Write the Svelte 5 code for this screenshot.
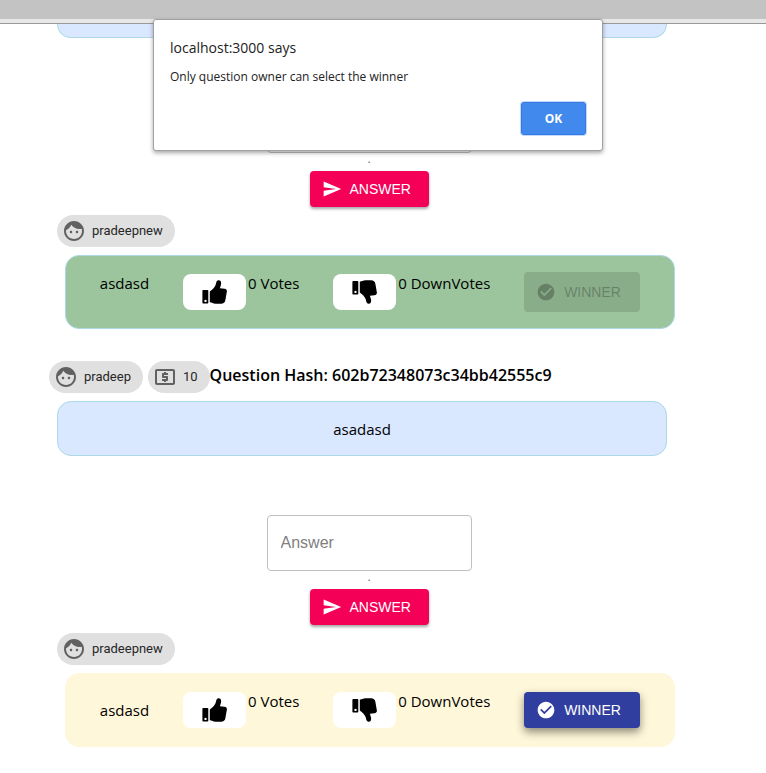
<script>
  const icons = {
    face: 'M9 11.75c-.69 0-1.25.56-1.25 1.25s.56 1.25 1.25 1.25 1.25-.56 1.25-1.25-.56-1.25-1.25-1.25zm6 0c-.69 0-1.25.56-1.25 1.25s.56 1.25 1.25 1.25 1.25-.56 1.25-1.25-.56-1.25-1.25-1.25zM12 2C6.48 2 2 6.48 2 12s4.48 10 10 10 10-4.48 10-10S17.52 2 12 2zm0 18c-4.41 0-8-3.59-8-8 0-.29.02-.58.05-.86 2.36-1.05 4.23-2.98 5.21-5.37C11.07 8.33 14.05 10 17.42 10c.78 0 1.53-.09 2.25-.26.21.71.33 1.47.33 2.26 0 4.41-3.59 8-8 8z',
    money: 'M11 17h2v-1h1c.55 0 1-.45 1-1v-3c0-.55-.45-1-1-1h-3v-1h4V8h-2V7h-2v1h-1c-.55 0-1 .45-1 1v3c0 .55.45 1 1 1h3v1H9v2h2v1zm9-13H4c-1.11 0-1.99.89-1.99 2L2 18c0 1.11.89 2 2 2h16c1.11 0 2-.89 2-2V6c0-1.11-.89-2-2-2zm0 14H4V6h16v12z',
    send: 'M2.01 21L23 12 2.01 3 2 10l15 2-15 2z',
    check: 'M12 2C6.48 2 2 6.48 2 12s4.48 10 10 10 10-4.48 10-10S17.52 2 12 2zm-2 15l-5-5 1.41-1.41L10 14.17l7.59-7.59L19 8l-9 9z'
  };

  const cuff = 'M1.200 0h4.300q.8 0 .8.800v12q0 .8-.8.800h-4.300q-.8 0-.8-.800v-12q0-.8.800-.800zM3.500 9.700a1.200 1.200 0 1 0 .01 0z';
  const hand = 'M7.800 11.500C10.500 9.500 12.600 7.500 13.600 5C14.300 3 14.200 .6 16.500.3C18.800.1 19.600 2.500 18.900 5L17.900 8.300L22.500 8.700C24.800 9 25.200 10.500 24.700 12.500L23.400 20C23 22.500 21.500 23.700 19 23.700H13.500C11 23.700 10 22.500 7.800 22.300z';

  let open = $state(true);

  const posts = [
    {
      clipped: true,
      answer: { user: 'pradeepnew', text: 'asdasd', won: true }
    },
    {
      user: 'pradeep',
      reward: 10,
      hash: '602b72348073c34bb42555c9',
      text: 'asadasd',
      answer: { user: 'pradeepnew', text: 'asdasd', won: false }
    }
  ];
</script>

{#snippet icon(name, size)}
  <svg class={size} viewBox="0 0 24 24" aria-hidden="true"><path d={icons[name]} /></svg>
{/snippet}

{#snippet thumb(down)}
  <svg class="thumb" viewBox="0 0 25 24" aria-hidden="true">
    <path fill-rule="evenodd" d={cuff} transform={down ? 'translate(0 1)' : 'translate(0 10)'} />
    <path d={hand} transform={down ? 'matrix(1 0 0 -1 0 24)' : undefined} />
  </svg>
{/snippet}

{#snippet chip(name, text)}
  <span class="chip">{@render icon(name, 'large')}<span>{text}</span></span>
{/snippet}

<div class="toolbar"></div>

<main>
  {#each posts as post}
    <article>
      {#if post.clipped}
        <div class="question clipped"></div>
      {:else}
        <header>
          {@render chip('face', post.user)}
          {@render chip('money', post.reward)}
          <strong>Question Hash: {post.hash}</strong>
        </header>
        <div class="question">{post.text}</div>
      {/if}

      <form onsubmit={(e) => e.preventDefault()}>
        <input type="text" placeholder="Answer" aria-label="Answer" />
        <span class="helper">.</span>
        <button class="btn send" type="submit">{@render icon('send', 'small')}ANSWER</button>
      </form>

      <div class="author">{@render chip('face', post.answer.user)}</div>
      <div class="answer" class:won={post.answer.won}>
        <p class="text">{post.answer.text}</p>
        <div class="vote">
          <button type="button" aria-label="Vote up">{@render thumb(false)}</button>
          <span>0 Votes</span>
        </div>
        <div class="vote">
          <button type="button" aria-label="Vote down">{@render thumb(true)}</button>
          <span>0 DownVotes</span>
        </div>
        <button class="btn winner" type="button" disabled={post.answer.won} onclick={() => (open = true)}>
          {@render icon('check', 'small')}WINNER
        </button>
      </div>
    </article>
  {/each}
</main>

<dialog {open} aria-labelledby="alert-title">
  <h1 id="alert-title">localhost:3000 says</h1>
  <p>Only question owner can select the winner</p>
  <button type="button" onclick={() => (open = false)}>OK</button>
</dialog>

<style>
  :global(body) {
    margin: 0;
    background: #fff;
    color: #000;
    font: 15px/24px "Open Sans", "Noto Sans", sans-serif;
  }

  * {
    box-sizing: border-box;
  }

  p,
  h1 {
    margin: 0;
  }

  button {
    border: 0;
    cursor: pointer;
  }

  svg {
    display: block;
    flex: none;
    fill: currentColor;
  }

  .small {
    width: 20px;
    height: 20px;
  }

  .large {
    width: 24px;
    height: 24px;
    color: #616161;
  }

  .toolbar {
    height: 24px;
    background: #e8e8e8;
    border-top: 19px solid #c3c3c3;
    border-bottom: 1px solid #999;
  }

  main {
    padding: 0 83px 24px 49px;
  }

  article + article {
    margin-top: 32px;
  }

  header {
    display: flex;
    margin-bottom: 8px;
  }

  header .chip + .chip {
    margin-left: 5px;
  }

  header strong {
    font-size: 16px;
    font-weight: 600;
    line-height: 28px;
    white-space: nowrap;
  }

  .chip {
    display: inline-flex;
    align-items: center;
    height: 32px;
    padding: 0 12px 0 5px;
    gap: 6px;
    border-radius: 16px;
    background: #e0e0e0;
    color: #262626;
    font: 13px/20px Roboto, sans-serif;
  }

  .question {
    display: flex;
    align-items: center;
    justify-content: center;
    height: 55px;
    margin: 0 16px 0 8px;
    border: 1px solid #add8e6;
    border-radius: 14px;
    background: #d9e7ff;
  }

  .clipped {
    height: 14px;
    border-top: 0;
    border-radius: 0 0 14px 14px;
  }

  form {
    display: flex;
    flex-direction: column;
    align-items: center;
    margin: 59px 0 8px 6px;
  }

  input {
    width: 205px;
    height: 56px;
    padding: 0 13px;
    border: 1px solid #c0c0c0;
    border-radius: 4px;
    background: #fff;
    font: 16px "Liberation Sans", Arial, sans-serif;
  }

  input::placeholder {
    color: #808080;
    opacity: 1;
  }

  .helper {
    height: 18px;
    color: #757575;
    font-size: 12px;
    line-height: 12px;
  }

  .btn {
    display: flex;
    align-items: center;
    gap: 8px;
    height: 36px;
    padding: 0 16px 0 12px;
    border-radius: 4px;
    color: #fff;
    font: 14px/24px "Liberation Sans", Arial, sans-serif;
  }

  .send {
    width: 119px;
    background: #f50057;
    box-shadow: 0 2px 3px rgba(0, 0, 0, 0.35);
  }

  .author {
    display: flex;
    margin: 0 0 8px 8px;
  }

  .answer {
    display: flex;
    align-items: center;
    justify-content: space-evenly;
    height: 74px;
    margin: 0 8px 0 16px;
    border: 1px solid #fff7d9;
    border-radius: 14px;
    background: #fff7d9;
  }

  .won {
    border-color: #add8e6;
    background: #9cc59d;
  }

  .won .text {
    align-self: flex-start;
    padding-top: 15px;
  }

  .vote {
    display: flex;
    gap: 2px;
  }

  .vote button {
    display: flex;
    align-items: center;
    justify-content: center;
    width: 63px;
    height: 36px;
    padding: 0;
    border-radius: 8px;
    background: #fff;
    color: #000;
  }

  .vote span {
    line-height: 18px;
  }

  .thumb {
    width: 25px;
    height: 24px;
  }

  .winner {
    width: 116px;
    background: #303f9f;
    box-shadow: 0 4px 8px rgba(0, 0, 0, 0.45);
  }

  .winner:disabled {
    height: 40px;
    background: rgba(0, 0, 0, 0.12);
    color: rgba(0, 0, 0, 0.26);
    box-shadow: none;
  }

  dialog {
    position: absolute;
    top: 19px;
    left: 0;
    right: 10px;
    width: 450px;
    margin: 0 auto;
    padding: 16px 16px 15px;
    border: 1px solid #a0a0a0;
    border-radius: 3px;
    background: #fff;
    color: #222;
    box-shadow: 0 2px 4px rgba(0, 0, 0, 0.35);
  }

  dialog[open] {
    display: flex;
    flex-direction: column;
  }

  dialog h1 {
    font-size: 14px;
    font-weight: 400;
    line-height: 24px;
  }

  dialog p {
    margin-top: 7px;
    font-size: 12px;
    line-height: 20px;
  }

  dialog button {
    align-self: flex-end;
    width: 65px;
    height: 33px;
    margin-top: 15px;
    border: 1px solid #3579e0;
    border-radius: 3px;
    background: #4289ee;
    color: #fff;
    font: 700 12px/20px "Open Sans", "Noto Sans", sans-serif;
    box-shadow: 0 0 0 1px #c3dafa;
  }
</style>
